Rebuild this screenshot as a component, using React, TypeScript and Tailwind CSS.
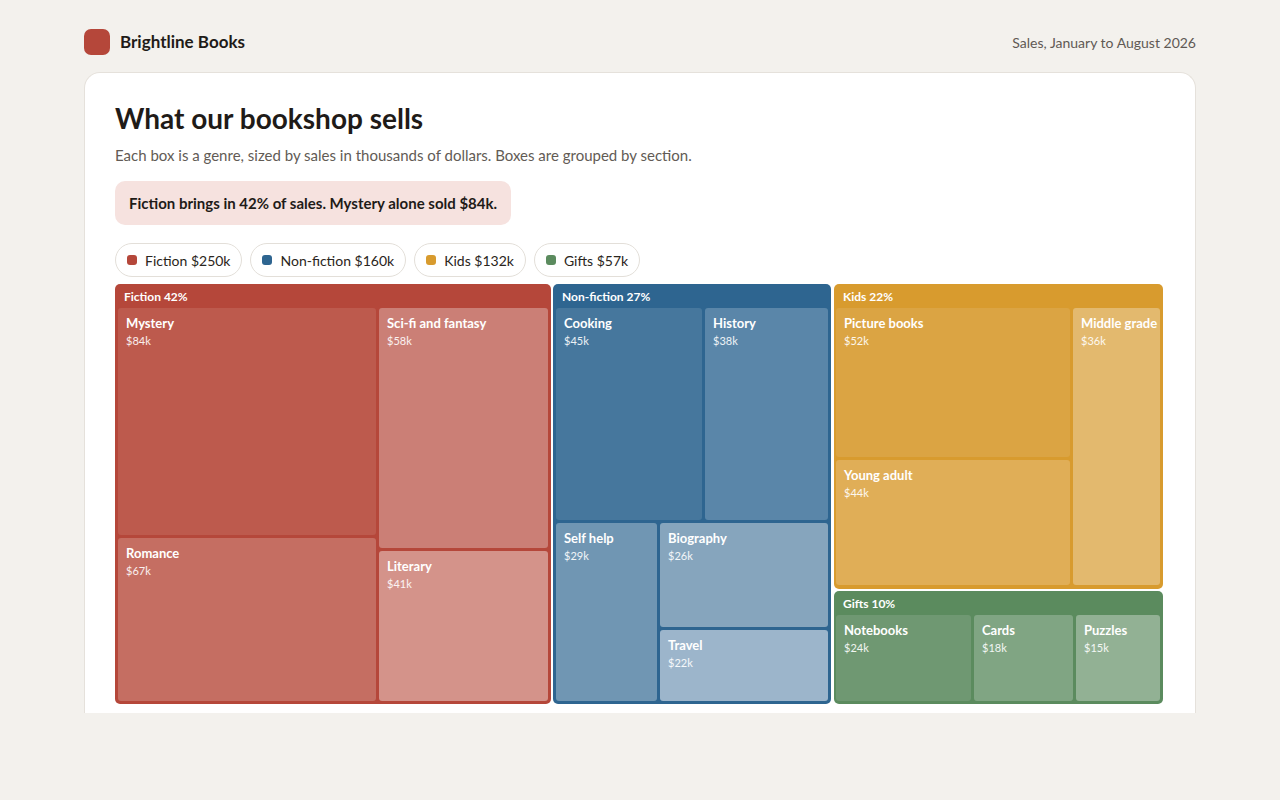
import React from "react";

type Tile = { n: string; v: string; x: number; y: number; w: number; h: number; c: string };
const groups = [
  { n: "Fiction 42%", x: 116, y: 307, w: 436, h: 420, c: "bg-[#b5473a]" },
  { n: "Non-fiction 27%", x: 554, y: 307, w: 278, h: 420, c: "bg-[#2e6590]" },
  { n: "Kids 22%", x: 835, y: 307, w: 329, h: 305, c: "bg-[#d89b2e]" },
  { n: "Gifts 10%", x: 835, y: 614, w: 329, h: 113, c: "bg-[#5b8b5e]" },
];
const tiles: Tile[] = [
  { n: "Mystery", v: "$84k", x: 119, y: 331, w: 258, h: 227, c: "bg-[#bd5a4d]" },
  { n: "Sci-fi and fantasy", v: "$58k", x: 380, y: 331, w: 169, h: 240, c: "bg-[#cb7f76]" },
  { n: "Romance", v: "$67k", x: 119, y: 561, w: 258, h: 163, c: "bg-[#c56e62]" },
  { n: "Literary", v: "$41k", x: 380, y: 574, w: 169, h: 150, c: "bg-[#d4938a]" },
  { n: "Cooking", v: "$45k", x: 557, y: 331, w: 146, h: 212, c: "bg-[#46779d]" },
  { n: "History", v: "$38k", x: 706, y: 331, w: 123, h: 212, c: "bg-[#5a86a9]" },
  { n: "Self help", v: "$29k", x: 557, y: 546, w: 101, h: 178, c: "bg-[#7096b3]" },
  { n: "Biography", v: "$26k", x: 661, y: 546, w: 168, h: 104, c: "bg-[#86a5bd]" },
  { n: "Travel", v: "$22k", x: 661, y: 653, w: 168, h: 71, c: "bg-[#9cb5cb]" },
  { n: "Picture books", v: "$52k", x: 837, y: 331, w: 234, h: 149, c: "bg-[#dba443]" },
  { n: "Young adult", v: "$44k", x: 837, y: 483, w: 234, h: 125, c: "bg-[#e0ae57]" },
  { n: "Middle grade", v: "$36k", x: 1074, y: 331, w: 87, h: 277, c: "bg-[#e3b96e]" },
  { n: "Notebooks", v: "$24k", x: 837, y: 638, w: 135, h: 86, c: "bg-[#6f9872]" },
  { n: "Cards", v: "$18k", x: 975, y: 638, w: 99, h: 86, c: "bg-[#80a583]" },
  { n: "Puzzles", v: "$15k", x: 1077, y: 638, w: 84, h: 86, c: "bg-[#92b194]" },
];
const OX = 116, OY = 307;

export default function App() {
  return (
    <div className="h-[800px] bg-[#f3f1ed] overflow-hidden text-[#1f1b18]" style={{ fontFamily: "Lato, 'Noto Sans', sans-serif" }}>
      <div className="mx-[84px] pt-7 flex items-center justify-between h-[72px] pb-4">
        <div className="flex items-center gap-[10px]">
          <div className="w-[26px] h-[26px] rounded-[7px] bg-[#b5473a]" />
          <span className="text-[17px] font-bold">Brightline Books</span>
        </div>
        <span className="text-[14px] text-[#5f5954]">Sales, January to August 2026</span>
      </div>
      <div className="mx-[84px] h-[641px] bg-white border border-b-0 border-[#e5e1db] rounded-t-[16px] overflow-hidden px-[30px] pt-[26px]">
        <h1 className="text-[28px] font-bold leading-[38px]">What our bookshop sells</h1>
        <p className="mt-[6px] text-[15px] leading-6 text-[#625b55] w-[580px]">Each box is a genre, sized by sales in thousands of dollars. Boxes are grouped by section.</p>
        <div className="mt-[14px] inline-block bg-[#f6e2df] rounded-[10px] px-[14px] py-[11px] text-[15px] font-bold leading-[22px]">Fiction brings in 42% of sales. Mystery alone sold $84k.</div>
        <div className="mt-[18px] flex gap-2">
          {[["Fiction $250k", "bg-[#b5473a]"], ["Non-fiction $160k", "bg-[#2e6590]"], ["Kids $132k", "bg-[#d89b2e]"], ["Gifts $57k", "bg-[#5b8b5e]"]].map(([t, c]) => (
            <div key={t} className="flex items-center gap-[8px] h-[34px] px-[11px] border border-[#e3dfd9] rounded-full text-[14px] text-[#2a2520]">
              <span className={`w-[10px] h-[10px] rounded-[3px] ${c}`} />{t}
            </div>
          ))}
        </div>
        <div className="relative mt-[7px] h-[420px]">
          {groups.map((g) => (
            <div key={g.n} className={`absolute rounded-[5px] ${g.c}`} style={{ left: g.x - OX, top: g.y - OY, width: g.w, height: g.h }}>
              <div className="px-[9px] pt-[4px] text-[12px] font-bold text-white">{g.n}</div>
            </div>
          ))}
          {tiles.map((t) => (
            <div key={t.n} className={`absolute rounded-[3px] overflow-hidden whitespace-nowrap px-[8px] pt-[7px] text-white ${t.c}`} style={{ left: t.x - OX, top: t.y - OY, width: t.w, height: t.h }}>
              <div className="text-[13px] font-bold leading-4">{t.n}</div>
              <div className="text-[11px] leading-4 mt-[2px] text-white/90">{t.v}</div>
            </div>
          ))}
        </div>
      </div>
    </div>
  );
}
